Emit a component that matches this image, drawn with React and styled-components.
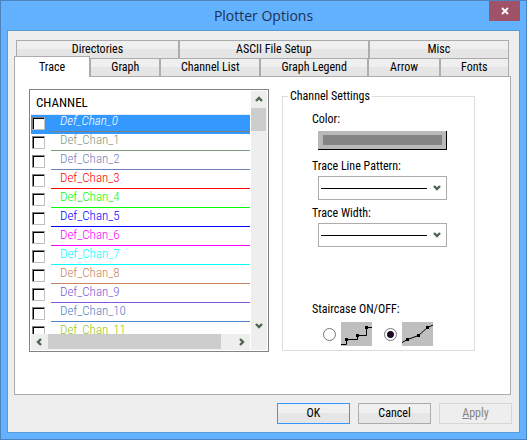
import React, { useState } from "react";
import styled, { createGlobalStyle, css } from "styled-components";

const GlobalStyle = createGlobalStyle`
  *, *::before, *::after { box-sizing: border-box; }
  body { margin: 0; }
  button, input, select { font: inherit; color: inherit; margin: 0; }
`;

const Window = styled.main`
  display: flex;
  flex-direction: column;
  min-height: 100vh;
  padding: 0 6px 6px;
  border: 1px solid #4c83bd;
  background: #63b2ff;
  color: #000;
  font: 12px/16px "Roboto Condensed", "Liberation Sans Narrow", Roboto, sans-serif;
`;

const TitleBar = styled.header`
  display: grid;
  grid-template-columns: 31px 1fr 31px;
  height: 29px;
`;

const Title = styled.h1`
  grid-column: 2;
  margin: 0;
  text-align: center;
  font: 400 14px/29px "Open Sans", "Noto Sans", sans-serif;
  color: #1f3050;
`;

const CloseButton = styled.button`
  display: grid;
  place-items: center;
  height: 20px;
  padding: 0;
  border: 0;
  background: #a05268;
  color: #fff;
`;

const Client = styled.div`
  flex: 1;
  display: flex;
  flex-direction: column;
  padding: 9px 8px 8px 6px;
  border: 1px solid #559cd8;
  background: #eee;
`;

const TabRow = styled.div`
  display: flex;
  height: 18px;
  margin: 0 2px;
`;

const Tab = styled.button`
  flex: ${(p) => p.$grow} 1 0;
  min-width: 0;
  padding: 0;
  border: 1px solid #acacac;
  border-bottom: 0;
  background: linear-gradient(#efefef 50%, #e5e5e5 50%);
  line-height: 17px;
  white-space: nowrap;
  ${(p) =>
    p.$active &&
    css`
      height: 21px;
      margin: -2px 0 -1px -2px;
      background: #fff;
      position: relative;
    `}
`;

const Page = styled.section`
  flex: 1;
  display: grid;
  grid-template-columns: 240fr 193fr;
  gap: 13px;
  padding: 12px 35px 42px 14px;
  border: 1px solid #acacac;
  background: #fff;
`;

const ListBox = styled.div`
  display: grid;
  grid-template-columns: 1fr 16px;
  grid-template-rows: 1fr 16px;
  column-gap: 1px;
  height: 263px;
  padding: 1px;
  border: 1px solid #828282;
  font-size: 13px;
`;

const ListView = styled.div`
  overflow: hidden;
`;

const ListHeader = styled.div`
  height: 24px;
  padding: 0 5px;
  border-bottom: 1px solid #e8ecf4;
  line-height: 24px;
`;

const Channels = styled.ul`
  margin: 0;
  padding: 0;
  list-style: none;
  font-weight: 300;
`;

const ChannelRow = styled.label`
  display: grid;
  grid-template-columns: 20px 1fr;
  height: 19px;
  padding-bottom: 2px;
  background: ${(p) => (p.$selected ? "#3399ff" : "#fff")};
`;

const CheckBox = styled.input`
  appearance: none;
  width: 13px;
  height: 13px;
  margin: 2px 0 0 1px;
  border: 1px solid;
  border-color: #808080 #c0c0c0 #c0c0c0 #808080;
  background: #fff;
  box-shadow: inset 1px 1px #000;
  &:checked { background: #404040; }
`;

const ChannelName = styled.span`
  height: 17px;
  padding-left: 9px;
  border-bottom: 1px solid ${(p) => p.$color};
  color: ${(p) => (p.$selected ? "#fff" : p.$color)};
  font-style: ${(p) => (p.$selected ? "italic" : "normal")};
  line-height: 12px;
`;

const ScrollBar = styled.div`
  display: flex;
  flex-direction: ${(p) => (p.$horizontal ? "row" : "column")};
  background: #eee;
`;

const ScrollCorner = styled.div`
  background: #eee;
`;

const ScrollButton = styled.button`
  display: grid;
  place-items: center;
  flex: none;
  width: 16px;
  height: 16px;
  padding: 0;
  border: 0;
  background: none;
  color: #4f6350;
`;

const VerticalThumb = styled.div`
  height: 23px;
  width: 15px;
  margin: 1px 0 auto;
  background: #cdcdcd;
`;

const HorizontalThumb = styled.div`
  height: 15px;
  flex: 172 1 0;
  margin-left: 1px;
  background: #cdcdcd;
`;

const TrackSpace = styled.div`
  flex: 13 1 0;
`;

const Settings = styled.fieldset`
  min-width: 0;
  margin: 0;
  height: 262px;
  padding: 0 27px 0 29px;
  border: 1px solid #ddd;
`;

const Legend = styled.legend`
  margin-left: -24px;
  padding: 0 2px;
  line-height: 14px;
`;

const Field = styled.div`
  display: flex;
  flex-direction: column;
  padding-left: 6px;
  margin-top: ${(p) => p.$top}px;
`;

const Caption = styled.label`
  margin: 0 0 ${(p) => p.$below}px -6px;
`;

const ColorButton = styled.button`
  height: 19px;
  padding: 4px 4px 4px 5px;
  border: solid #000;
  border-width: 0 1px 1px 0;
  background: #b9b9b9;
`;

const Swatch = styled.span`
  display: block;
  height: 10px;
  background: #848484;
`;

const Combo = styled.div`
  display: grid;
  grid-template-columns: 1fr 18px;
  align-items: center;
  height: 24px;
  border: 1px solid #acacac;
  color: #4f6350;
`;

const ComboSelect = styled.select`
  grid-area: 1 / 1 / 2 / 3;
  appearance: none;
  width: 100%;
  height: 100%;
  border: 0;
  background: transparent;
`;

const LineSample = styled.span`
  grid-area: 1 / 1 / 2 / 2;
  height: 1px;
  margin: 0 1px 0 2px;
  background: #000;
  pointer-events: none;
`;

const ComboArrow = styled.span`
  grid-area: 1 / 2 / 2 / 3;
  display: grid;
  place-items: center;
  pointer-events: none;
`;

const Choices = styled.div`
  display: flex;
  gap: 12px;
  padding-left: 5px;
`;

const Choice = styled.label`
  display: flex;
  align-items: center;
  gap: 5px;
`;

const Radio = styled.input`
  appearance: none;
  width: 13px;
  height: 13px;
  border: 1px solid #777;
  border-radius: 50%;
  background: #fff;
  &:checked { background: radial-gradient(circle, #1c0a28 3px, #fff 4px); }
`;

const Picture = styled.svg`
  display: block;
  background: #bfbfbf;
`;

const Footer = styled.footer`
  display: flex;
  justify-content: flex-end;
  gap: 8px;
  margin: 8px -1px 0 0;
`;

const DialogButton = styled.button`
  width: 73px;
  height: 21px;
  padding: 0;
  border: 1px solid ${(p) => (p.$primary ? "#3399ff" : "#acacac")};
  background: linear-gradient(#f0f0f0 50%, #e6e6e6 50%);
  line-height: 19px;
  &:disabled {
    border-color: #d6d6d6;
    background: #eee;
    color: #838383;
  }
`;

const CHEVRONS = {
  up: "M1 6 4 3 7 6",
  down: "M1 2 4 5 7 2",
  left: "M6 1 3 4 6 7",
  right: "M2 1 5 4 2 7",
};

const Chevron = ({ to }) => (
  <svg width="8" height="8" viewBox="0 0 8 8" aria-hidden="true">
    <path d={CHEVRONS[to]} fill="none" stroke="currentColor" strokeWidth="2.4" />
  </svg>
);

const UPPER_TABS = [["Directories", 163], ["ASCII File Setup", 190], ["Misc", 140]];
const LOWER_TABS = [
  ["Trace", 76],
  ["Graph", 70],
  ["Channel List", 100],
  ["Graph Legend", 109],
  ["Arrow", 71],
  ["Fonts", 69],
];

const COLORS = [
  "#808080", "#809880", "#7080b8", "#ff0000", "#00ff00", "#0000ff",
  "#ff00ff", "#00ffff", "#c48660", "#8058d8", "#4c84c8", "#98c818",
];

const TabStrip = ({ tabs, active, onSelect }) => (
  <TabRow role="tablist">
    {tabs.map(([name, grow]) => (
      <Tab
        key={name}
        role="tab"
        aria-selected={name === active}
        $grow={grow}
        $active={name === active}
        onClick={() => onSelect(name)}
      >
        {name}
      </Tab>
    ))}
  </TabRow>
);

const LineCombo = ({ id, options }) => (
  <Combo>
    <ComboSelect id={id}>
      {options.map((o) => (
        <option key={o} value={o} aria-label={o} />
      ))}
    </ComboSelect>
    <LineSample />
    <ComboArrow>
      <Chevron to="down" />
    </ComboArrow>
  </Combo>
);

export default function App() {
  const [tab, setTab] = useState("Trace");
  const [selected, setSelected] = useState(0);

  return (
    <Window>
      <GlobalStyle />
      <TitleBar>
        <Title>Plotter Options</Title>
        <CloseButton aria-label="Close">
          <svg width="8" height="8" viewBox="0 0 8 8" aria-hidden="true">
            <path d="M1 1 7 7M7 1 1 7" stroke="currentColor" strokeWidth="1.8" />
          </svg>
        </CloseButton>
      </TitleBar>
      <Client>
        <TabStrip tabs={UPPER_TABS} active={tab} onSelect={setTab} />
        <TabStrip tabs={LOWER_TABS} active={tab} onSelect={setTab} />
        <Page>
          <ListBox>
            <ListView>
              <ListHeader>CHANNEL</ListHeader>
              <Channels>
                {COLORS.map((color, i) => (
                  <li key={color}>
                    <ChannelRow $selected={i === selected}>
                      <CheckBox type="checkbox" onFocus={() => setSelected(i)} />
                      <ChannelName $color={color} $selected={i === selected}>
                        Def_Chan_{i}
                      </ChannelName>
                    </ChannelRow>
                  </li>
                ))}
              </Channels>
            </ListView>
            <ScrollBar>
              <ScrollButton aria-label="Scroll up"><Chevron to="up" /></ScrollButton>
              <VerticalThumb />
              <ScrollButton aria-label="Scroll down"><Chevron to="down" /></ScrollButton>
            </ScrollBar>
            <ScrollBar $horizontal>
              <ScrollButton aria-label="Scroll left"><Chevron to="left" /></ScrollButton>
              <HorizontalThumb />
              <TrackSpace />
              <ScrollButton aria-label="Scroll right"><Chevron to="right" /></ScrollButton>
            </ScrollBar>
            <ScrollCorner />
          </ListBox>
          <Settings>
            <Legend>Channel Settings</Legend>
            <Field $top={8}>
              <Caption htmlFor="color" $below={4}>Color:</Caption>
              <ColorButton id="color"><Swatch /></ColorButton>
            </Field>
            <Field $top={8}>
              <Caption htmlFor="pattern" $below={2}>Trace Line Pattern:</Caption>
              <LineCombo id="pattern" options={["Solid", "Dashed", "Dotted"]} />
            </Field>
            <Field $top={5}>
              <Caption htmlFor="width" $below={2}>Trace Width:</Caption>
              <LineCombo id="width" options={["1", "2", "3"]} />
            </Field>
            <Field $top={54}>
              <Caption as="span" $below={5}>Staircase ON/OFF:</Caption>
              <Choices>
                <Choice>
                  <Radio type="radio" name="staircase" aria-label="Staircase on" />
                  <Picture width="31" height="24" viewBox="0 0 31 24" aria-hidden="true">
                    <path d="M0 22.5H5.500V17.500H16.500V13.500H25.500V5.500H31" fill="none" stroke="#000" />
                    <path d="M4 16h3v3h-3zM15 12h3v3h-3zM24 4h3v3h-3z" />
                  </Picture>
                </Choice>
                <Choice>
                  <Radio type="radio" name="staircase" aria-label="Staircase off" defaultChecked />
                  <Picture width="31" height="24" viewBox="0 0 31 24" aria-hidden="true">
                    <path d="M0 20.500 5.500 17.500 16.500 13.500 25.500 5.500 31 3" fill="none" stroke="#000" />
                    <path d="M4 16h3v3h-3zM15 12h3v3h-3zM24 4h3v3h-3z" />
                  </Picture>
                </Choice>
              </Choices>
            </Field>
          </Settings>
        </Page>
        <Footer>
          <DialogButton $primary>OK</DialogButton>
          <DialogButton>Cancel</DialogButton>
          <DialogButton disabled><u>A</u>pply</DialogButton>
        </Footer>
      </Client>
    </Window>
  );
}
